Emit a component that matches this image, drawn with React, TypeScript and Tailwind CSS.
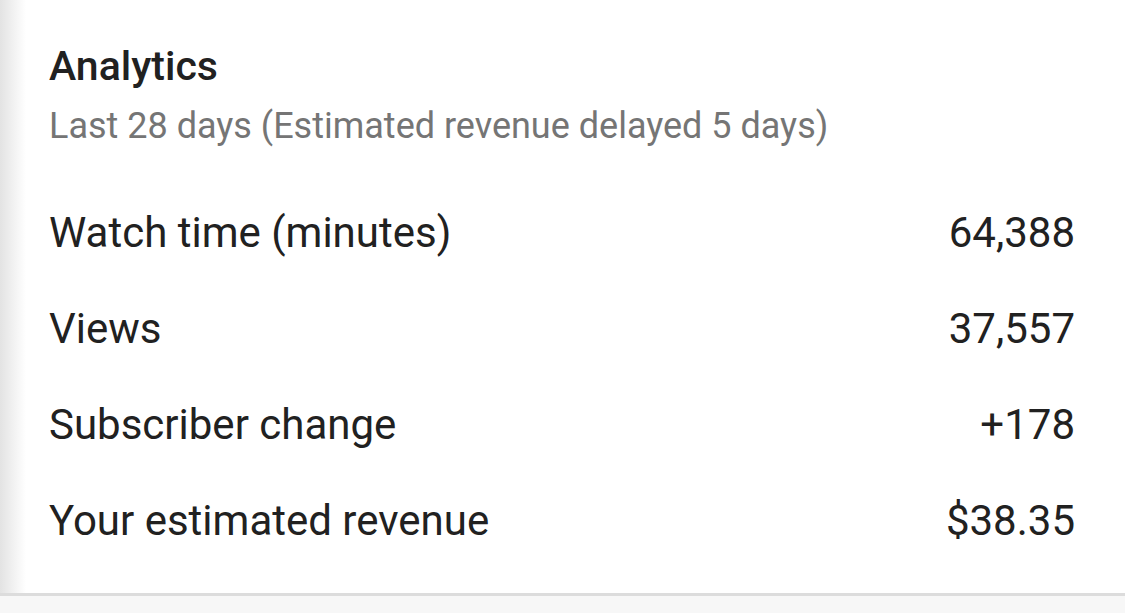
import React from "react";

const rows = [
  { label: "Watch time (minutes)", value: "64,388" },
  { label: "Views", value: "37,557" },
  { label: "Subscriber change", value: "+178" },
  { label: "Your estimated revenue", value: "$38.35" },
];

export default function App() {
  return (
    <div className="w-full h-[613px] flex flex-col bg-[#f7f7f7] font-['Roboto',sans-serif] overflow-hidden">
      {/* Card */}
      <div className="flex h-[593px] bg-white">
        {/* left edge shadow */}
        <div className="w-[26px] shrink-0 bg-gradient-to-r from-[#e3e3e3] to-white"></div>

        <div className="flex-1 pl-[23px] pr-[50px] pt-[40px]">
          <h2 className="text-[41px] leading-[52px] font-medium text-[#212121]">
            Analytics
          </h2>
          <p className="mt-[14px] text-[36px] leading-[40px] text-[#757575]">
            Last 28 days (Estimated revenue delayed 5 days)
          </p>

          <div className="mt-[38px] flex flex-col">
            {rows.map((row) => (
              <div
                key={row.label}
                className="h-[96px] flex items-center justify-between text-[42px] text-[#212121]"
              >
                <span>{row.label}</span>
                <span>{row.value}</span>
              </div>
            ))}
          </div>
        </div>
      </div>
      <div className="h-[3px] bg-[#dcdcdc]"></div>
    </div>
  );
}
